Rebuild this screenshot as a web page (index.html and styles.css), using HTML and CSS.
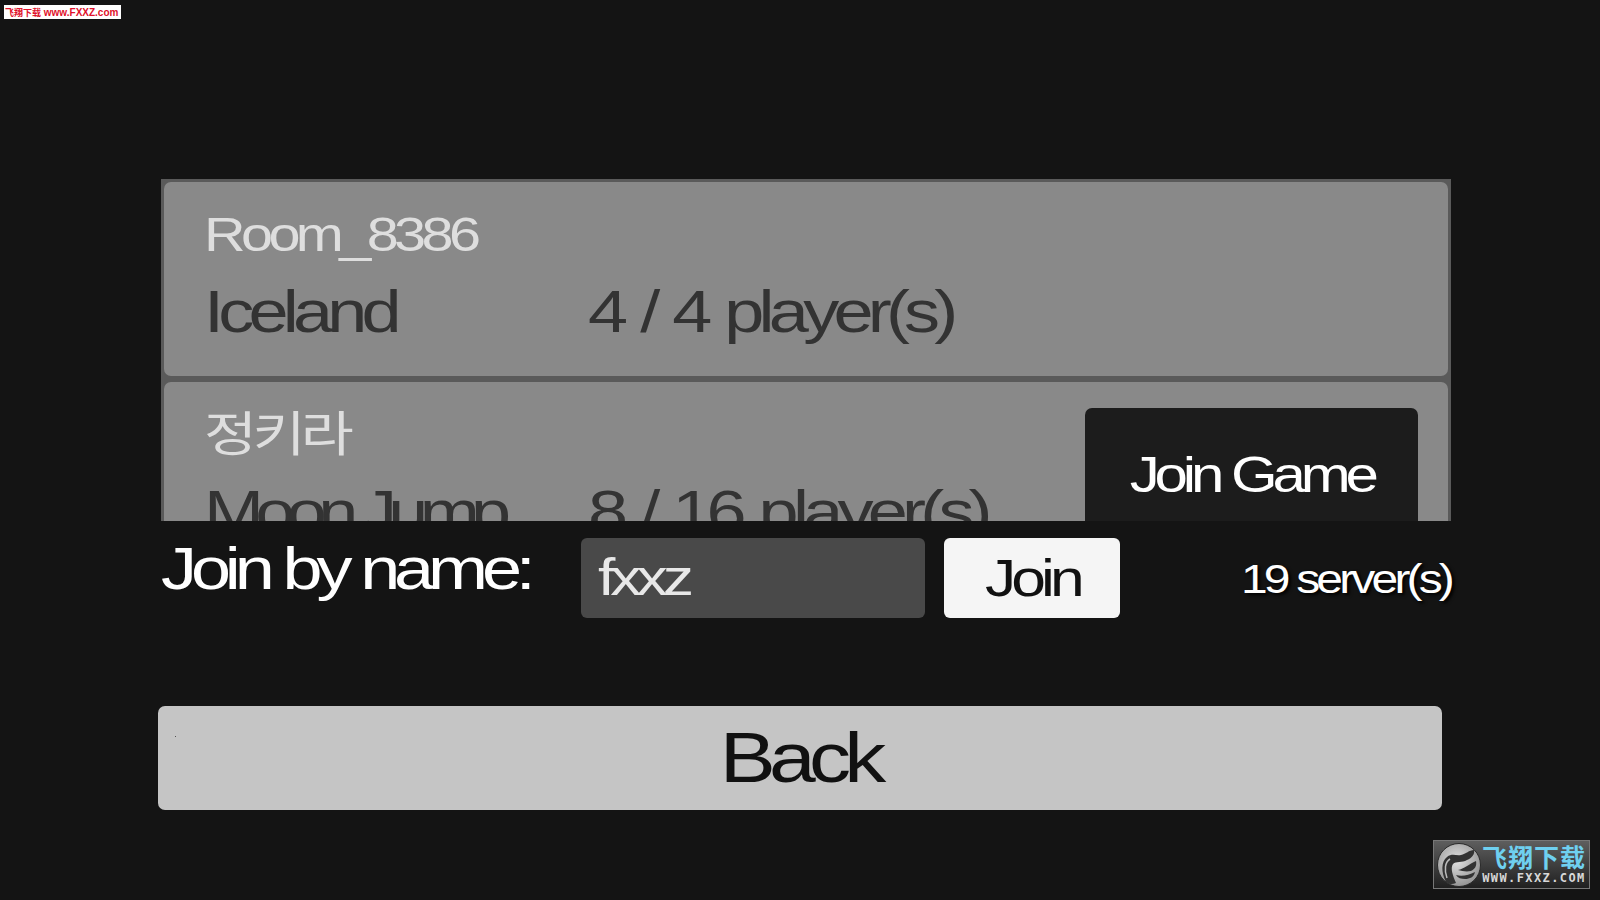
FILE: index.html
```html
<!DOCTYPE html>
<html lang="en">
<head>
	<meta charset="utf-8" />
	<title>Server list</title>
	<link rel="stylesheet" href="styles.css">
</head>
<body>
	<div class="wm-top"><span class="wm-top-cn">飞翔下载</span> www.FXXZ.com</div>
	<div class="page">
		<div class="server-list">
			<div class="server">
				<div class="server-info">
					<div class="server-name"><span class="wide">Room_8386</span></div>
					<div class="server-line">
						<span class="server-map"><span class="wide">Iceland</span></span>
						<span class="wide server-players">4 / 4 player(s)</span>
					</div>
				</div>
			</div>
			<div class="server">
				<div class="server-info">
					<div class="server-name"><span class="wide">정키라</span></div>
					<div class="server-line">
						<span class="server-map"><span class="wide wide-tight">Moon Jump</span></span>
						<span class="wide server-players">8 / 16 player(s)</span>
					</div>
				</div>
				<button class="join-game"><span class="wide wide-center">Join Game</span></button>
			</div>
		</div>
		<div class="join-row">
			<label class="join-label"><span class="wide">Join by name:</span></label>
			<div class="join-input"><span class="wide">fxxz</span></div>
			<button class="join-btn"><span class="wide wide-center">Join</span></button>
			<div class="server-count"><span class="wide wide-right">19 server(s)</span></div>
		</div>
		<button class="back-btn"><span class="back-dot"></span><span class="wide wide-center">Back</span></button>
	</div>
	<div class="wm-logo">
		<svg class="wm-icon" width="46" height="46" viewBox="0 0 46 46">
			<defs>
				<radialGradient id="wmDisc" cx="45%" cy="40%" r="65%">
					<stop offset="0" stop-color="#e2e2e2"/>
					<stop offset="1" stop-color="#8e8e8e"/>
				</radialGradient>
			</defs>
			<circle cx="23" cy="23" r="21.5" fill="url(#wmDisc)" stroke="#2a2a2a" stroke-width="1"/>
			<path d="M10 40C5 30 5 20 11 15C16 11 20 14 25 13C30 12 33 8 38 8C39 12 36 16 31 18C26 21 20 19 17 22C14 26 17 34 20 41C16 43 12 42 10 40Z" fill="#333333"/>
			<path d="M11 36C8 28 9 20 14 17" fill="none" stroke="#bdbdbd" stroke-width="1.5"/>
			<path d="M22 28C28 27 33 22 40 19C41 24 39 27 35 29C30 30 26 29 22 28Z" fill="#333333"/>
			<path d="M20 33C26 35 33 33 39 30C38 35 34 37 29 37C25 37 22 36 20 33Z" fill="#333333"/>
		</svg>
		<div class="wm-text">
			<div class="wm-cn">飞翔下载</div>
			<div class="wm-url">WWW.FXXZ.COM</div>
		</div>
	</div>
</body>
</html>
```

FILE: styles.css
```css
body
{
	margin: 0;
	height: 900px;
	overflow: hidden;
	background-color: #141414;
	font-family: "Liberation Sans", "Noto Sans CJK KR", sans-serif;
}

button
{
	font-family: inherit;
	border: none;
	padding: 0;
}

/* the game stretches its text sideways, letters nearly touch */
.wide
{
	display: inline-block;
	transform: scaleX(1.2);
	transform-origin: left center;
	letter-spacing: -0.08em;
}

.wide-center
{
	transform-origin: center;
}

.wide-right
{
	transform-origin: right center;
}

.wide-tight
{
	letter-spacing: -0.12em;
}

.page
{
	padding: 179px 0 0 158px;
}

.server-list
{
	margin-left: 3px;
	width: 1284px;
	height: 339px;
	padding: 3px 3px 0;
	background-color: #5a5a5a;
	overflow: hidden;
}

.server
{
	display: flex;
	justify-content: space-between;
	height: 194px;
	margin-bottom: 6px;
	padding: 0 30px 0 40px;
	box-sizing: border-box;
	background-color: #898989;
	border-radius: 7px;
}

.server-name
{
	margin-top: 24px;
	height: 58px;
	font-size: 48px;
	line-height: 58px;
	color: #dedede;
}

.server-line
{
	margin-top: 13px;
	font-size: 60px;
	line-height: 70px;
	color: #333333;
	white-space: nowrap;
}

.server-map
{
	display: inline-block;
	width: 367px;
}

.server-players
{
	word-spacing: 3px;
}

.join-game
{
	margin-top: 26px;
	width: 333px;
	height: 134px;
	background-color: #1c1c1c;
	border-radius: 7px;
	color: #ffffff;
	font-size: 50px;
}

.join-game .wide
{
	letter-spacing: -0.085em;
}

.join-row
{
	display: flex;
	align-items: flex-start;
	margin: 17px 0 0 3px;
	width: 1290px;
	height: 80px;
}

.join-label
{
	width: 420px;
	margin-top: -4px;
	font-size: 60px;
	line-height: 70px;
	color: #ffffff;
}

.join-label .wide
{
	letter-spacing: -0.085em;
}

.join-input
{
	width: 344px;
	height: 80px;
	padding-left: 17px;
	box-sizing: border-box;
	background-color: #494949;
	border-radius: 6px;
	color: #e8e8e8;
	font-size: 52px;
	line-height: 78px;
}

.join-btn
{
	margin-left: 19px;
	width: 176px;
	height: 80px;
	background-color: #f5f5f5;
	border-radius: 6px;
	color: #111111;
	font-size: 52px;
}

.server-count
{
	margin-left: auto;
	font-size: 40px;
	line-height: 82px;
	color: #ffffff;
	text-shadow: 2px 2px 3px #000000;
}

.back-btn
{
	position: relative;
	display: block;
	margin-top: 88px;
	width: 1284px;
	height: 104px;
	background-color: #c5c5c5;
	border-radius: 7px;
	color: #111111;
	font-size: 70px;
}

.back-dot
{
	position: absolute;
	left: 17px;
	top: 30px;
	width: 1px;
	height: 1px;
	background-color: #555555;
}

.wm-top
{
	position: absolute;
	left: 4px;
	top: 5px;
	width: 117px;
	height: 14px;
	background-color: #ffffff;
	color: #e0102a;
	font-size: 10px;
	line-height: 15px;
	font-weight: bold;
	white-space: nowrap;
	text-indent: 1px;
}

.wm-top-cn
{
	font-size: 9px;
}

.wm-logo
{
	position: absolute;
	left: 1433px;
	top: 840px;
	width: 157px;
	height: 49px;
	box-sizing: border-box;
	display: flex;
	align-items: center;
	padding-left: 2px;
	border: 1px solid #777777;
	background: linear-gradient(#5e5e5e, #202020);
}

.wm-text
{
	text-align: center;
}

.wm-cn
{
	font-size: 25px;
	line-height: 27px;
	font-weight: bold;
	letter-spacing: 1px;
	color: #6fd0f0;
}

.wm-url
{
	font-family: "DejaVu Sans Mono", monospace;
	font-size: 12px;
	line-height: 13px;
	font-weight: bold;
	letter-spacing: 1.4px;
	color: #d8d8d8;
}
```
